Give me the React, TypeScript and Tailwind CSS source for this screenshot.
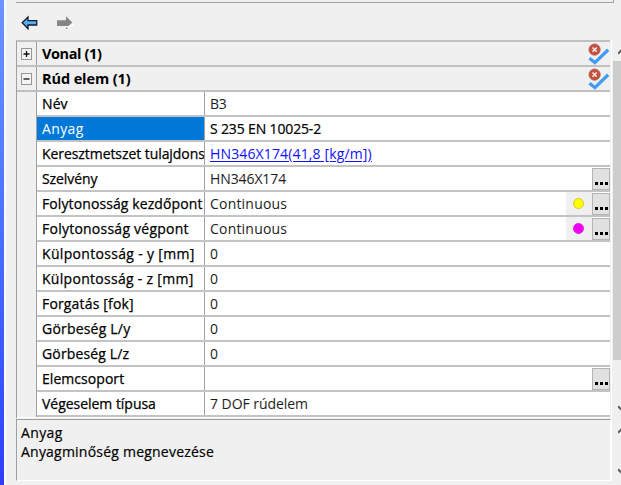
import type { ReactNode } from 'react';

type RowData = {
  label: string;
  labelTrack: string;
  value?: string;
  valueTrack?: string;
  selected?: boolean;
  link?: boolean;
  dark?: boolean;
  dot?: string;
  more?: boolean;
};

const rows: RowData[] = [
  { label: 'Név', labelTrack: 'tracking-[0.1px]', value: 'B3' },
  { label: 'Anyag', labelTrack: 'tracking-[0.35px]', value: 'S 235 EN 10025-2', valueTrack: 'tracking-[-0.15px]', selected: true, dark: true },
  { label: 'Keresztmetszet tulajdons', labelTrack: 'tracking-[-0.07px]', value: 'HN346X174(41,8 [kg/m])', valueTrack: 'tracking-[0.14px]', link: true },
  { label: 'Szelvény', labelTrack: 'tracking-[-0.1px]', value: 'HN346X174', valueTrack: 'tracking-[-0.1px]', more: true },
  { label: 'Folytonosság kezdőpont', labelTrack: 'tracking-[0.1px]', value: 'Continuous', valueTrack: 'tracking-[0.2px]', dot: 'bg-[#ffff00] border-[#d8cc20]', more: true },
  { label: 'Folytonosság végpont', labelTrack: 'tracking-[0.24px]', value: 'Continuous', valueTrack: 'tracking-[0.2px]', dot: 'bg-[#f000f0] border-[#e31be3]', more: true },
  { label: 'Külpontosság - y [mm]', labelTrack: 'tracking-[0.32px]', value: '0' },
  { label: 'Külpontosság - z [mm]', labelTrack: 'tracking-[0.29px]', value: '0' },
  { label: 'Forgatás [fok]', labelTrack: 'tracking-[0.16px]', value: '0' },
  { label: 'Görbeség L/y', labelTrack: 'tracking-[0.2px]', value: '0' },
  { label: 'Görbeség L/z', labelTrack: 'tracking-[0.15px]', value: '0' },
  { label: 'Elemcsoport', labelTrack: 'tracking-[0.05px]', more: true },
  { label: 'Végeselem típusa', labelTrack: 'tracking-[-0.03px]', value: '7 DOF rúdelem', valueTrack: 'tracking-[-0.05px]' },
];

function StatusIcon() {
  return (
    <svg width="22" height="22" viewBox="0 0 22 22" className="shrink-0">
      <circle cx="6.6" cy="6.6" r="5.6" fill="#c4513d" stroke="#a85a49" strokeWidth=".8" />
      <path d="M4.5 4.5l4.2 4.2M8.7 4.5L4.5 8.7" stroke="#fbe9e6" strokeWidth="1.6" />
      <path d="M1.4 15.3l5.5 4.3L20.2 6.8" fill="none" stroke="#429cf4" strokeWidth="3.3" />
    </svg>
  );
}

function Expander({ open }: { open: boolean }) {
  return (
    <svg width="11" height="12" viewBox="0 0 11 12" className="mr-px">
      <rect x=".5" y=".5" width="10" height="11" fill="#f4f4f4" stroke="#969696" />
      <path d={open ? 'M2.5 6h6' : 'M2.5 6h6M5.5 3v6'} stroke="#111" strokeWidth="1.3" />
    </svg>
  );
}

function Group({ title, track, open }: { title: string; track: string; open: boolean }) {
  return (
    <div className="flex h-[25px] shrink-0 border-b-2 border-[#c0c0c0]">
      <div className="flex w-[20px] shrink-0 items-center justify-center border-r border-[#a0a0a0]">
        <Expander open={open} />
      </div>
      <div className="flex flex-1 items-center justify-between pl-[5px]">
        <span className={`text-[14.5px] leading-[20px] font-bold ${track}`}>{title}</span>
        <StatusIcon />
      </div>
    </div>
  );
}

function More() {
  return (
    <div className="mt-px flex h-[22px] w-[18px] shrink-0 items-end justify-center gap-[2px] border border-[#b4b4b4] bg-[#e1e1e1] pb-[4px]">
      <i className="size-[3px] bg-black" />
      <i className="size-[3px] bg-black" />
      <i className="size-[3px] bg-black" />
    </div>
  );
}

function Row({ row }: { row: RowData }) {
  const valueColor = row.link ? 'text-[#1010ff] underline underline-offset-2' : row.dark ? 'text-black [-webkit-text-stroke:0.2px]' : 'text-[#1c1c1c]';
  return (
    <div className="flex h-[25px] shrink-0 border-b-2 border-[#c3c3c3] bg-white">
      <div className={`flex w-[168px] shrink-0 items-center overflow-hidden border-r border-[#a0a0a0] pl-[5px] ${row.selected ? 'bg-[#0078d7] text-white' : ''}`}>
        <span className={`text-[14px] leading-[20px] whitespace-nowrap ${row.selected ? '' : '[-webkit-text-stroke:0.25px]'} ${row.labelTrack}`}>{row.label}</span>
      </div>
      <div className="flex flex-1 items-center pl-[5px]">
        <span className={`flex-1 text-[14px] leading-[20px] whitespace-nowrap ${row.valueTrack ?? 'tracking-[-0.3px]'} ${valueColor}`}>{row.value}</span>
        {row.dot && (
          <div className="flex h-[23px] w-[26px] items-center bg-[#f0f0f0] pl-[7px]">
            <i className={`size-[11px] rounded-full border ${row.dot}`} />
          </div>
        )}
        {row.more && <More />}
      </div>
    </div>
  );
}

function Chevron({ up }: { up?: boolean }) {
  return (
    <svg width="8" height="8" viewBox="0 0 8 8" className="shrink-0">
      <path d={up ? 'M0 6.8L5 1.8L10 6.8' : 'M0 1.2L5 6.2L10 1.2'} fill="none" stroke="#606060" strokeWidth="2.2" />
    </svg>
  );
}

function Panel({ children }: { children: ReactNode }) {
  return <div className="flex w-[595px] shrink-0 flex-col">{children}</div>;
}

export default function App() {
  return (
    <div className="flex h-[485px] w-[621px] overflow-hidden bg-[#f0f0f0] font-['Open_Sans','Noto_Sans',sans-serif] text-black">
      <div className="w-[6px] shrink-0 border-r-2 border-[#fbfbfb] bg-linear-to-b from-[#6a94ff] to-[#2f3dfa]" />
      <div className="w-[10px] shrink-0" />
      <Panel>
        <div className="flex h-[40px] w-[598px] shrink-0 flex-col">
          <div className="h-[3px] shrink-0 border-r border-b border-[#a0a0a0]" />
          <div className="flex gap-[18px] pt-[12px] pl-[5px]">
            <svg width="17" height="15" viewBox="0 0 17 15">
              <path d="M1.2 7.8L7 2v3.7h8.7v4.3H7v3.7z" fill="#57aef5" stroke="#111c28" strokeWidth="1.3" />
            </svg>
            <svg width="19" height="16" viewBox="0 0 19 16">
              <path d="M11 10h4l3-2.2v2L11.5 14.5H10z" fill="#fff" />
              <path d="M1 5.3h9V1.2l6.3 6.3L12.5 11H1z" fill="#858585" />
              <path d="M10 12.5h1.5v1.5H10z" fill="#858585" />
            </svg>
          </div>
        </div>
        <div className="flex h-[378px] w-[594px] shrink-0 flex-col overflow-hidden border-t-2 border-l border-t-[#c0c0c0] border-l-[#a0a0a0] bg-white">
          <div className="flex flex-col bg-[#f0f0f0]">
            <Group title="Vonal (1)" track="tracking-[-0.4px]" open={false} />
            <Group title="Rúd elem (1)" track="tracking-[-0.1px]" open />
            <div className="flex">
              <div className="w-[20px] shrink-0 border-r border-[#a0a0a0]" />
              <div className="flex flex-1 flex-col">
                {rows.map((row) => <Row key={row.label} row={row} />)}
              </div>
            </div>
          </div>
        </div>
        <div className="mt-px h-[62px] w-[595px] shrink-0 border border-t-[#9c9c9c] border-r-white border-b-white border-l-[#a0a0a0] pt-[3px] pl-[4px] text-[14px] leading-[19px] [-webkit-text-stroke:0.2px]">
          <div className="tracking-[0.35px]"><span>Anyag</span></div>
          <div className="tracking-[0.22px]"><span>Anyagminőség megnevezése</span></div>
        </div>
      </Panel>
      <div className="flex flex-1 flex-col pt-[40px]">
        <div className="flex h-[378px] flex-col border-l border-white">
          <div className="flex h-[21px] items-center pl-[6px]"><Chevron up /></div>
          <div className="ml-px h-[299px] bg-[#cdcdcd]" />
          <div className="flex flex-1 items-center pt-[39px] pl-[6px]"><Chevron /></div>
        </div>
        <div className="flex h-[63px] flex-col justify-between border-l border-white pt-[8px] pb-[5px] pl-[6px]">
          <Chevron up />
          <Chevron />
        </div>
      </div>
    </div>
  );
}
